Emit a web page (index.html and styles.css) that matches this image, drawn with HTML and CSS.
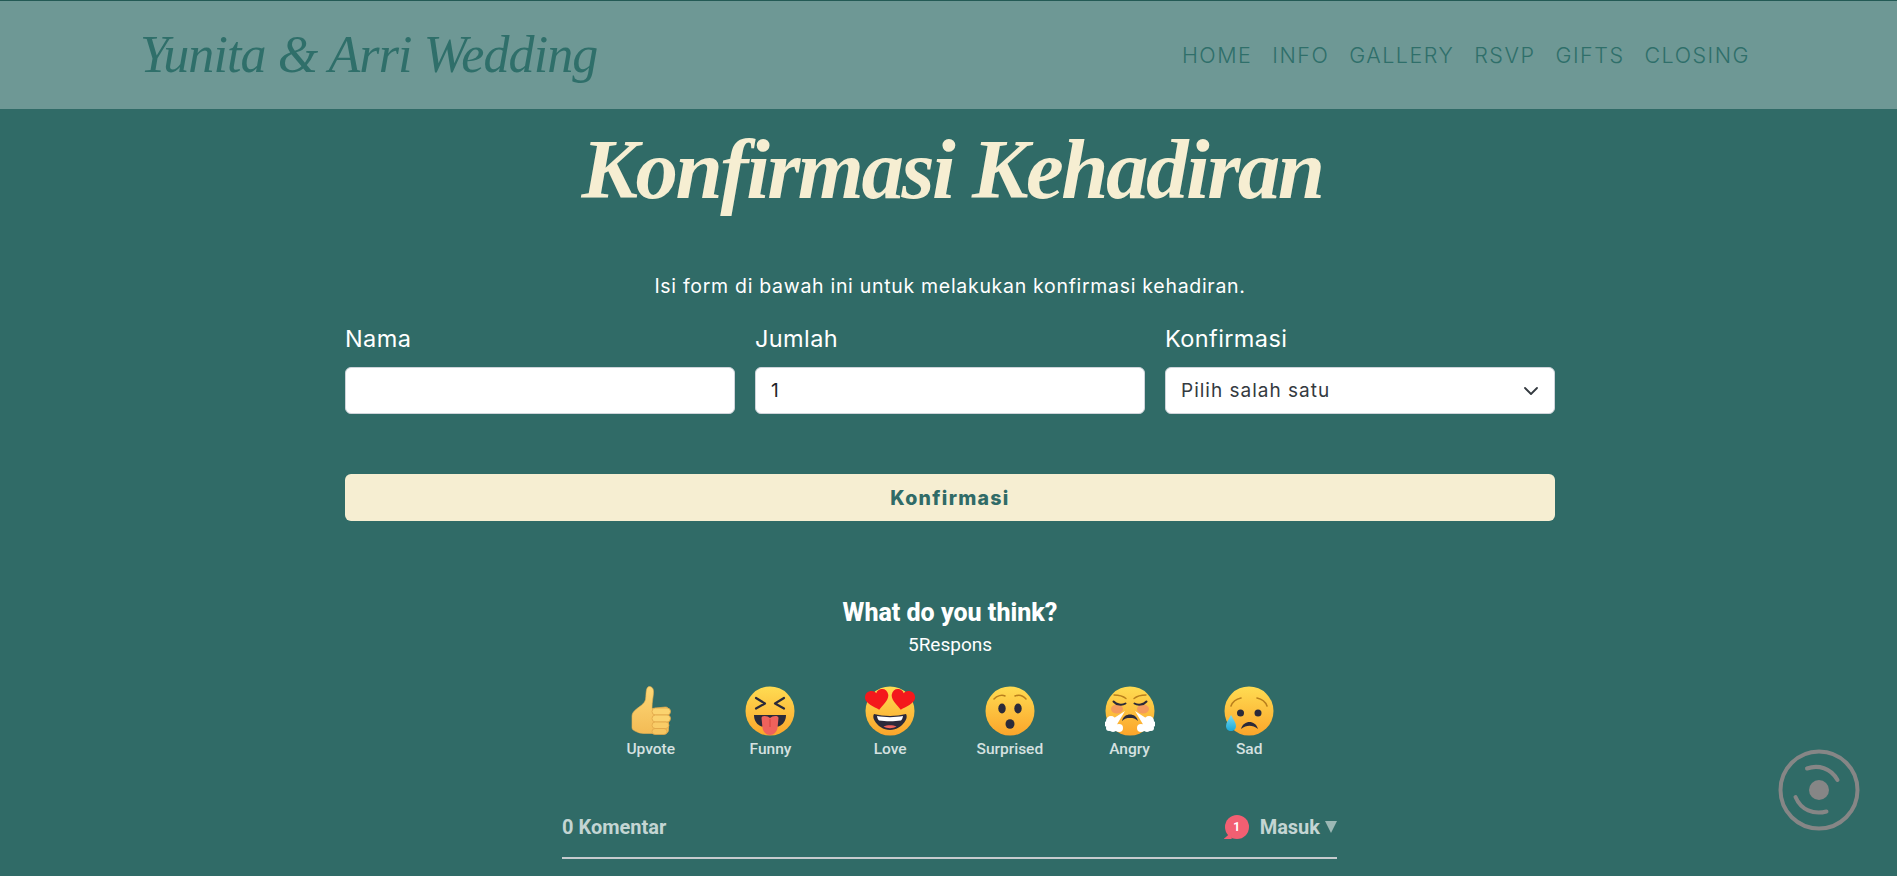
FILE: index.html
```html
<!DOCTYPE html>
<html lang="id">
<head>
<meta charset="utf-8">
<title>Yunita &amp; Arri Wedding</title>
<link rel="stylesheet" href="styles.css">
</head>
<body>
<header class="topbar">
  <a class="brand">Yunita &amp; Arri Wedding</a>
  <nav class="nav">
    <a>HOME</a><a>INFO</a><a>GALLERY</a><a>RSVP</a><a>GIFTS</a><a>CLOSING</a>
  </nav>
</header>
<main class="main">
  <section class="rsvp">
    <h1 class="title">Konfirmasi Kehadiran</h1>
    <p class="lead">Isi form di bawah ini untuk melakukan konfirmasi kehadiran.</p>
    <form class="form">
      <div class="fields">
        <div class="field">
          <label class="label">Nama</label>
          <div class="control"></div>
        </div>
        <div class="field">
          <label class="label">Jumlah</label>
          <div class="control">1</div>
        </div>
        <div class="field">
          <label class="label">Konfirmasi</label>
          <div class="control select">
            <span>Pilih salah satu</span>
            <svg class="chevron" viewBox="0 0 16 16" width="16" height="16"><path d="M2 5l6 6 6-6" fill="none" stroke="#343a40" stroke-width="1.800" stroke-linecap="round" stroke-linejoin="round"/></svg>
          </div>
        </div>
      </div>
      <div class="submit">Konfirmasi</div>
    </form>
  </section>

  <section class="reactions">
    <h2 class="think">What do you think?</h2>
    <div class="count">5Respons</div>
    <div class="emojis">
      <div class="emoji">
        <svg viewBox="0 0 50 50" width="50" height="50">
          <defs>
            <linearGradient id="face" x1="0" y1="0" x2="0" y2="1"><stop offset="0" stop-color="#ffdc52"/><stop offset="1" stop-color="#fba52b"/></linearGradient>
            <linearGradient id="hand" x1="0" y1="0" x2="0" y2="1"><stop offset="0" stop-color="#fdd877"/><stop offset="1" stop-color="#f3bb55"/></linearGradient>
            <linearGradient id="drop" x1="0" y1="0" x2="0" y2="1"><stop offset="0" stop-color="#7adcf0"/><stop offset="1" stop-color="#1ba8d8"/></linearGradient>
          </defs>
          <path d="M22 1c3-1.500 5.500 1 5.500 4.500 0 5-1.500 9.500-1.500 17l13-1.500c2-.2 3.500.8 3.500 2.500v20.500c0 2-1.500 3.500-3.500 3.500H18c-3.500 0-6-1-8-2-2-1-4-1.500-4-4V30c0-3 2-5 4.500-7 3-2.500 8-5 9-9.500.8-3.500 0-10.500 2.500-12.500z" fill="url(#hand)" stroke="#e8b050" stroke-width=".6"/>
          <rect x="26" y="22" width="18.500" height="7" rx="3.500" fill="#fbd36f" stroke="#dfa548" stroke-width=".8"/>
          <rect x="26" y="29" width="18.500" height="7" rx="3.500" fill="#fbd36f" stroke="#dfa548" stroke-width=".8"/>
          <rect x="26" y="36" width="17" height="6.500" rx="3.250" fill="#f9cc67" stroke="#dfa548" stroke-width=".8"/>
          <rect x="26" y="42.500" width="15" height="6" rx="3" fill="#f6c560" stroke="#dfa548" stroke-width=".8"/>
        </svg>
        <span class="emoji-label">Upvote</span>
      </div>
      <div class="emoji">
        <svg viewBox="0 0 50 50" width="50" height="50">
          <circle cx="25" cy="25" r="24.500" fill="url(#face)"/>
          <path d="M11 12l9 5.500-9 5M39 12l-9 5.500 9 5" fill="none" stroke="#2b2a3a" stroke-width="2.200" stroke-linecap="round" stroke-linejoin="round"/>
          <path d="M9 29h32c0 5.500-3 10-7.500 11.500h-17C12 39 9 34.500 9 29z" fill="#2b2a3a"/>
          <path d="M16.500 32c0-1.500 1.500-2 3-2 2.500 0 4 .8 5.500 2 1.500-1.200 3-2 5.500-2 1.500 0 3 .5 3 2l-1 10c-.4 3.500-3.500 7-7.500 7s-7-3.500-7.500-7z" fill="#ef625c"/>
          <path d="M25 33v8" stroke="#d2423f" stroke-width="1"/>
        </svg>
        <span class="emoji-label">Funny</span>
      </div>
      <div class="emoji">
        <svg viewBox="0 0 50 50" width="50" height="50">
          <circle cx="25" cy="25" r="24.500" fill="url(#face)"/>
          <path d="M9 28c10 2.500 22 2.500 32 0 1 1.500 1 4-.5 6.500-3 5.500-9 9.500-15.500 9.500s-12.500-4-15.500-9.500C8 32 8 29.500 9 28z" fill="#2b2a3a"/>
          <path d="M12 30c8 1.500 18 1.500 26 0-.3 2-1 3.500-2 4.500-6.500 1-15.500 1-22 0-1-1-1.700-2.500-2-4.500z" fill="#fff"/>
          <path d="M18.500 40.500c3.500-1.800 9.500-1.800 13 0-3.800 2.200-9.200 2.200-13 0z" fill="#ef625c"/>
          <path d="M12.500 24C8 20 .500 16 .500 10.500.500 6.500 3.500 4 7 4c2.500 0 4.500 1.200 5.500 3.200C13.500 5.200 15.500 4 18 4c3.500 0 6 2.500 6 6.500 0 5.500-7 9.500-11.500 13.500z" fill="#f4181c" transform="rotate(-10 12 14)"/>
          <path d="M12.500 24C8 20 .500 16 .500 10.500.500 6.500 3.500 4 7 4c2.500 0 4.500 1.200 5.500 3.200C13.500 5.200 15.500 4 18 4c3.500 0 6 2.500 6 6.500 0 5.500-7 9.500-11.500 13.500z" fill="#f4181c" transform="translate(50 0) scale(-1 1) rotate(-10 12 14)"/>
        </svg>
        <span class="emoji-label">Love</span>
      </div>
      <div class="emoji">
        <svg viewBox="0 0 50 50" width="50" height="50">
          <circle cx="25" cy="25" r="24.500" fill="url(#face)"/>
          <path d="M9 13c3-3.500 8-4.500 11-3M30 10c3.500-1.500 8-.5 11 3" fill="none" stroke="#b97f1d" stroke-width="1.500" stroke-linecap="round"/>
          <ellipse cx="17" cy="22.500" rx="3.700" ry="5" fill="#2b2a3a"/>
          <ellipse cx="33" cy="22.500" rx="3.700" ry="5" fill="#2b2a3a"/>
          <ellipse cx="25" cy="38" rx="4.500" ry="4.800" fill="#2b2a3a"/>
        </svg>
        <span class="emoji-label">Surprised</span>
      </div>
      <div class="emoji">
        <svg viewBox="0 0 50 50" width="50" height="50">
          <circle cx="25" cy="25" r="24.500" fill="url(#face)"/>
          <ellipse cx="12" cy="23" rx="6" ry="4.500" fill="#f08a6a" opacity=".7"/>
          <ellipse cx="38" cy="23" rx="6" ry="4.500" fill="#f08a6a" opacity=".7"/>
          <path d="M9 9c4 0 9 1 12 3.500M41 9c-4 0-9 1-12 3.500" fill="none" stroke="#b97f1d" stroke-width="1.300" stroke-linecap="round"/>
          <path d="M8.500 15.500c3 3.500 8.500 4 12 2M41.500 15.500c-3 3.500-8.500 4-12 2" fill="none" stroke="#2b2a3a" stroke-width="2" stroke-linecap="round"/>
          <path d="M17 35c1-4.500 4.500-6.500 8-6.500s7 2 8 6.500c-2.500-2.500-5-3-8-3s-5.500.5-8 3z" fill="#2b2a3a"/>
          <path d="M20 25L6 34l5 6zM30 25l14 9-5 6z" fill="#fff"/>
          <g fill="#fff"><circle cx="6" cy="35" r="5"/><circle cx="2.500" cy="38" r="3"/><circle cx="8" cy="41" r="5"/><circle cx="14" cy="42" r="4"/><circle cx="4" cy="42" r="3"/><circle cx="44" cy="35" r="5"/><circle cx="47.500" cy="38" r="3"/><circle cx="42" cy="41" r="5"/><circle cx="36" cy="42" r="4"/><circle cx="46" cy="42" r="3"/></g>
        </svg>
        <span class="emoji-label">Angry</span>
      </div>
      <div class="emoji">
        <svg viewBox="0 0 50 50" width="50" height="50">
          <circle cx="25" cy="25" r="24.500" fill="url(#face)"/>
          <path d="M7 20c1.500-4 5-7 10-8M43 20c-1.500-4-5-7-10-8" fill="none" stroke="#b97f1d" stroke-width="1.600" stroke-linecap="round"/>
          <circle cx="16.500" cy="27" r="3.500" fill="#2b2a3a"/>
          <circle cx="34" cy="27" r="3.500" fill="#2b2a3a"/>
          <path d="M17 43c1.500-5 5-7 8.500-7s7 2 8.500 7c-3-2.500-5.500-3.200-8.500-3.200S20 40.500 17 43z" fill="#2b2a3a"/>
          <path d="M7 29c2 4 5 7.500 5 11 0 3-2.300 5-5 5s-5-2-5-5c0-3.500 3-7 5-11z" fill="url(#drop)"/>
        </svg>
        <span class="emoji-label">Sad</span>
      </div>
    </div>
  </section>

  <section class="comments">
    <span class="comment-count">0 Komentar</span>
    <div class="login">
      <span class="badge">1</span>
      <span class="masuk">Masuk</span>
      <span class="caret"></span>
    </div>
  </section>
</main>
<svg class="player" viewBox="0 0 84 84" width="84" height="84">
  <circle cx="42" cy="42" r="38.500" fill="none" stroke="#868686" stroke-width="4"/>
  <circle cx="42" cy="42" r="10" fill="#868686"/>
  <path d="M30 20.500c11-4 24-.5 30.500 11.500M18.500 49c5.500 13 18 18 31 14.500" fill="none" stroke="#868686" stroke-width="4" stroke-linecap="round"/>
</svg>
</body>
</html>
```
FILE: styles.css
```css
* { box-sizing: border-box; }
html, body { margin: 0; height: 876px; overflow: hidden; }
body {
  background: #306b67;
  color: #fff;
  font-family: "Inter", "Liberation Sans", sans-serif;
}
.topbar {
  height: 109px;
  border-top: 1px solid #235a55;
  background: #6e9895;
  display: flex;
  align-items: center;
  justify-content: space-between;
  padding: 0 147px 0 140px;
}
.brand {
  font-family: "Liberation Serif", cursive;
  font-style: italic;
  font-size: 52px;
  line-height: 1;
  letter-spacing: -.9px;
  color: #2f6f6a;
}
.nav { display: flex; gap: 20px; }
.nav a {
  font-size: 21.500px;
  font-weight: 300;
  letter-spacing: 1.500px;
  color: #2f6f6a;
}
.main { padding-left: 3px; }
.rsvp { width: 1210px; margin: 0 auto; }
.title {
  margin: 0;
  height: 150px;
  padding: 12px 0 0 4px;
  text-align: center;
  font-family: "Liberation Serif", cursive;
  font-style: italic;
  font-weight: 700;
  font-size: 85px;
  line-height: 96px;
  letter-spacing: -2.500px;
  color: #f6eed2;
}
.lead {
  margin: 14px 0 0;
  height: 26px;
  text-align: center;
  font-size: 19.500px;
  line-height: 26px;
  letter-spacing: .7px;
}
.fields {
  margin-top: 26px;
  display: grid;
  grid-template-columns: repeat(3, 1fr);
  gap: 20px;
}
.label {
  display: block;
  height: 42px;
  font-size: 23.500px;
  line-height: 28px;
  letter-spacing: .4px;
  color: #fff;
}
.control {
  height: 47px;
  background: #fff;
  border: 1px solid #ced4da;
  border-radius: 6px;
  padding: 0 15px;
  display: flex;
  align-items: center;
  font-size: 19px;
  color: #212529;
}
.select { justify-content: space-between; color: #343a40; letter-spacing: 1px; }
.chevron { flex: none; }
.submit {
  margin-top: 60px;
  height: 47px;
  background: #f6eed2;
  border-radius: 6px;
  display: flex;
  align-items: center;
  justify-content: center;
  font-size: 19.500px;
  font-weight: 800;
  letter-spacing: 1.300px;
  color: #306b67;
}
.reactions { font-family: "Roboto", sans-serif; text-align: center; }
.think {
  margin: 76px 0 0;
  font-size: 25px;
  line-height: 32px;
  font-weight: 800;
}
.count {
  font-size: 19px;
  line-height: 24px;
  margin-top: 4px;
}
.emojis {
  margin-top: 29px;
  display: flex;
  justify-content: center;
}
.emoji {
  width: 119.700px;
  display: flex;
  flex-direction: column;
  align-items: center;
  font-size: 15.500px;
  font-weight: 500;
  color: #d5e1e0;
}
.emoji svg { display: block; }
.emoji-label { margin-top: 5px; line-height: 17px; }
.comments {
  width: 775px;
  margin: 57px 0 0 calc(50% - 388px);
  padding-bottom: 18px;
  border-bottom: 2px solid #c6cbce;
  display: flex;
  justify-content: space-between;
  align-items: center;
  font-family: "Roboto", sans-serif;
  font-size: 20px;
  line-height: 24px;
  font-weight: 700;
  color: #c3d5d3;
}
.login { display: flex; align-items: center; }
.badge {
  position: relative;
  width: 24px;
  height: 24px;
  margin-right: 11px;
  border-radius: 50%;
  background: #f25f72;
  color: #fff;
  font-size: 12px;
  line-height: 24px;
  text-align: center;
}
.badge::after {
  content: "";
  position: absolute;
  left: -1px;
  bottom: 0;
  width: 8px;
  height: 7px;
  background: #f25f72;
  clip-path: polygon(100% 0, 100% 100%, 0 100%);
}
.caret {
  margin-left: 5px;
  width: 0;
  height: 0;
  border-left: 6px solid transparent;
  border-right: 6px solid transparent;
  border-top: 12px solid #9cb8b5;
}
.player {
  position: fixed;
  left: 1777px;
  top: 748px;
}
```
